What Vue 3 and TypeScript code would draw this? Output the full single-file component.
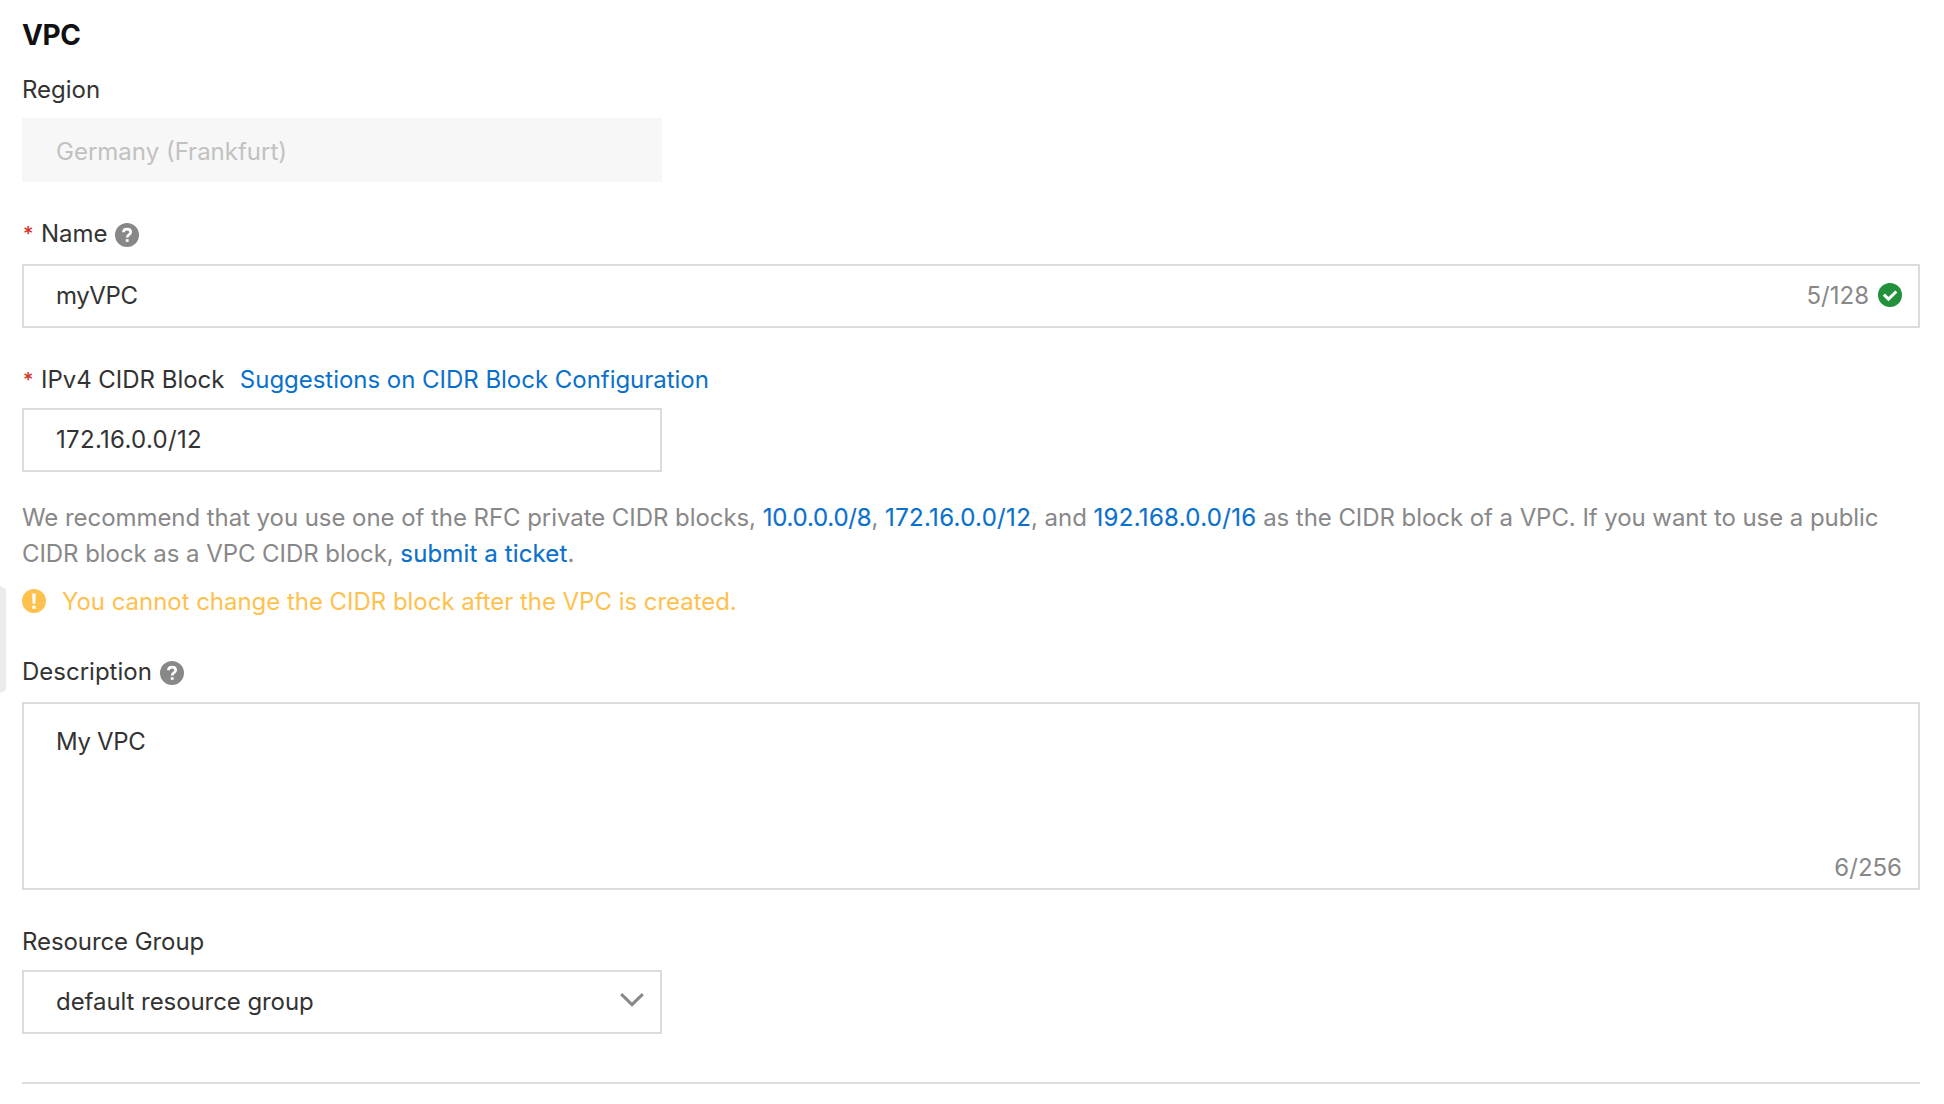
<script setup lang="ts">
import { ref } from 'vue'

const region = ref('Germany (Frankfurt)')
const name = ref('myVPC')
const cidr = ref('172.16.0.0/12')
const description = ref('My VPC')
const resourceGroup = ref('default resource group')
const nameLimit = 128
</script>

<template>
  <main class="page">
    <div class="handle"></div>
    <h1 class="title">VPC</h1>

    <section class="field region">
      <div class="label">Region</div>
      <div class="box short disabled">{{ region }}</div>
    </section>

    <section class="field name">
      <div class="label">
        <span class="star">*</span><span class="label-text">Name</span>
        <svg class="icon help" viewBox="0 0 24 24">
          <circle cx="12" cy="12" r="12" fill="#888" />
          <path d="M8.4 9.2C8.5 7.1 9.9 6.2 12 6.2s3.7 1.1 3.7 3c0 2.5-3.5 2.7-3.5 5.2" fill="none" stroke="#fff" stroke-width="2.7" />
          <rect x="10.8" y="16.2" width="2.8" height="2.6" fill="#fff" />
        </svg>
      </div>
      <div class="box">
        <span class="name-value">{{ name }}</span>
        <span class="count">{{ name.length }}/{{ nameLimit }}</span>
        <svg class="icon ok" viewBox="0 0 24 24">
          <circle cx="12" cy="12" r="12" fill="#23903c" />
          <path d="M5.9 11.6l4.6 4.5 7.8-7.6" fill="none" stroke="#fff" stroke-width="3" />
        </svg>
      </div>
    </section>

    <section class="field cidr">
      <div class="label">
        <span class="star">*</span><span class="label-text">IPv4 CIDR Block</span>
        <a class="suggest">Suggestions on CIDR Block Configuration</a>
      </div>
      <div class="box short"><span class="cidr-value">{{ cidr }}</span></div>
      <p class="hint">
        <span class="lead">We recommend that you use one of the RFC private CIDR blocks, </span><a class="ten">10.0.0.0/8</a>, <a>172.16.0.0/12</a><span class="lead">, and </span><a>192.168.0.0/16</a><span class="tail"> as the CIDR block of a VPC. If you want to use a public</span><br />
        <span class="second">CIDR block as a VPC CIDR block, </span><a class="ticket">submit a ticket</a>.
      </p>
      <div class="warning">
        <svg class="icon" viewBox="0 0 24 24">
          <circle cx="12" cy="12" r="12" fill="#ffc14d" />
          <path d="M10.2 4.5h3.5l-.4 10.3h-2.7z M10.3 16.8h3.3v3h-3.3z" fill="#fff" />
        </svg>
        <span>You cannot change the CIDR block after the VPC is created.</span>
      </div>
    </section>

    <section class="field description">
      <div class="label">
        <span>Description</span>
        <svg class="icon help" viewBox="0 0 24 24">
          <circle cx="12" cy="12" r="12" fill="#888" />
          <path d="M8.4 9.2C8.5 7.1 9.9 6.2 12 6.2s3.7 1.1 3.7 3c0 2.5-3.5 2.7-3.5 5.2" fill="none" stroke="#fff" stroke-width="2.7" />
          <rect x="10.8" y="16.2" width="2.8" height="2.6" fill="#fff" />
        </svg>
      </div>
      <div class="box area">
        <span class="area-value">{{ description }}</span>
        <span class="area-count">{{ description.length }}/256</span>
      </div>
    </section>

    <section class="field group">
      <div class="label">Resource Group</div>
      <div class="box short select">
        <span class="group-value">{{ resourceGroup }}</span>
        <svg class="chevron" viewBox="0 0 24 14">
          <path d="M1.2 1.2L12 11.6 22.8 1.2" fill="none" stroke="#888" stroke-width="3" />
        </svg>
      </div>
    </section>
    <hr class="divider" />
  </main>
</template>

<style>
body {
  margin: 0;
  background: #fff;
}
</style>

<style scoped>
.page {
  position: relative;
  box-sizing: border-box;
  width: 1944px;
  height: 1104px;
  padding: 17px 24px 0 22px;
  overflow: hidden;
  font: 24px/36px Inter, "Liberation Sans", sans-serif;
  color: #333;
  white-space: nowrap;
}

/* collapsed side panel grip over the left edge */
.handle {
  position: absolute;
  left: 0;
  top: 586px;
  width: 6px;
  height: 107px;
  background: #ebebeb;
  clip-path: polygon(0 0, 100% 3px, 100% 104px, 0 100%);
}

.title {
  margin: 0;
  font-size: 28px;
  line-height: 36px;
  font-weight: 700;
  letter-spacing: -0.4px;
  color: #111;
}

.label {
  display: flex;
  align-items: center;
  height: 36px;
}

.box {
  box-sizing: border-box;
  display: flex;
  align-items: center;
  height: 64px;
  padding: 0 16px 0 32px;
  border: 2px solid #dcdcdc;
}

.short {
  width: 640px;
}

.disabled {
  padding-top: 3px;
  background: #f7f7f7;
  border-color: #f7f7f7;
  color: #c1c1c1;
}

.icon {
  display: block;
  flex: none;
  width: 24px;
  height: 24px;
}

.help {
  margin: 2px 0 0 7px;
}

.description .help {
  margin-left: 8px;
}

.ok {
  margin-top: -2px;
}

.star {
  width: 18px;
  padding-left: 1px;
  color: #d93026;
  font-size: 20px;
  font-weight: 500;
}

.region {
  margin-top: 19px;
}

.region .label {
  margin-bottom: 10px;
}

.name {
  margin-top: 34px;
}

.name .label {
  margin-bottom: 12px;
}

.name-value {
  flex: 1;
  letter-spacing: -0.4px;
}

.count {
  margin-right: 9px;
  color: #888;
}

.cidr {
  margin-top: 34px;
}

.cidr .label {
  margin-bottom: 10px;
}

.cidr .label-text {
  letter-spacing: -0.03px;
}

.suggest {
  margin-left: 15.5px;
  letter-spacing: -0.03px;
  color: #0a70cc;
}

.cidr-value {
  letter-spacing: 0.3px;
}

.hint {
  margin: 28px 0 0;
  color: #888;
}

.hint a {
  color: #0a70cc;
  -webkit-text-stroke: 0.15px #0a70cc;
  letter-spacing: 0.31px;
}

.hint .ten {
  letter-spacing: -0.22px;
}

.hint .ticket {
  letter-spacing: 0.13px;
}

.lead {
  letter-spacing: -0.06px;
}

.tail {
  letter-spacing: -0.065px;
}

.second {
  letter-spacing: -0.06px;
}

.warning {
  display: flex;
  align-items: center;
  height: 36px;
  margin-top: 12px;
  color: #ffc14d;
  letter-spacing: -0.035px;
}

.warning .icon {
  margin: -2px 16px 0 0;
}

.description {
  margin-top: 34px;
}

.description .label {
  margin-bottom: 12px;
}

.area {
  height: 188px;
  flex-direction: column;
  align-items: stretch;
  justify-content: space-between;
  padding: 20px 16px 2px 32px;
}

.area-value {
  letter-spacing: -0.35px;
}

.area-count {
  align-self: flex-end;
  color: #888;
}

.group {
  margin-top: 34px;
}

.group .label {
  margin-bottom: 10px;
  letter-spacing: -0.08px;
}

.select {
  justify-content: space-between;
}

.group-value {
  letter-spacing: -0.07px;
}

.chevron {
  width: 24px;
  height: 14px;
  margin-top: -4px;
}

.divider {
  height: 2px;
  margin: 48px 0 0;
  border: 0;
  background: #dcdcdc;
}
</style>
